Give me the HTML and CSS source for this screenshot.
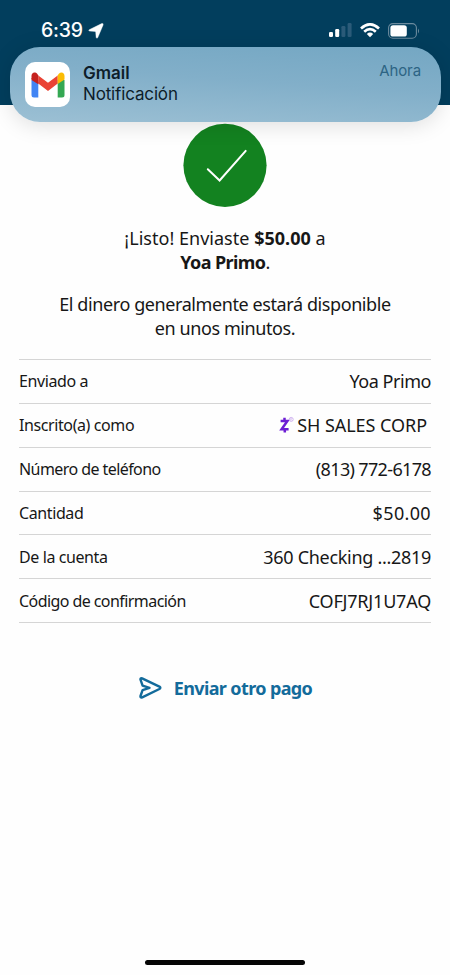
FILE: index.html
```html
<!DOCTYPE html>
<html lang="es">
<head>
<meta charset="utf-8">
<meta name="viewport" content="width=device-width, initial-scale=1">
<title>Pago enviado</title>
<link rel="stylesheet" href="styles.css">
</head>
<body>
<div class="screen">
  <header class="topbar">
    <div class="clock"><span class="time">6:39</span>
      <svg class="location" width="16" height="16" viewBox="0 0 16 16"><path d="M1.2 6.7 13.7.6Q15.7.2 15.1 2L9.8 14.6Q8.7 16 8.1 14.3L7.7 9Q7.6 8.4 7 8.4L1.6 8.1Q0 7.6 1.2 6.7Z" fill="#fff" stroke="#fff" stroke-width=".4"/></svg>
    </div>
    <div class="indicators">
      <svg width="24" height="15" viewBox="0 0 24 15"><rect x="0" y="9" width="4" height="5" rx="1.2" fill="#fff"/><rect x="6.2" y="6" width="4" height="8" rx="1.2" fill="#fff"/><rect x="12.4" y="3" width="4" height="11" rx="1.2" fill="#2b5b79"/><rect x="18.6" y="0" width="4" height="14" rx="1.2" fill="#2b5b79"/></svg>
      <svg class="wifi" width="20" height="15" viewBox="0 0 20 15"><g fill="none" stroke="#fff" stroke-width="2.7"><path d="M1 5.5Q10-2.7 19 5.5"/><path d="M4.2 8.8Q10 3.6 15.8 8.8"/></g><path d="M6.8 10.9Q10 8.1 13.2 10.9L10 14.2Z" fill="#fff"/></svg>
      <svg class="battery" width="32" height="16" viewBox="0 0 32 16"><rect x=".6" y=".6" width="27.8" height="14.6" rx="4.2" fill="none" stroke="#6c8b9e" stroke-width="1.1"/><rect x="2.4" y="2.3" width="16.4" height="11.2" rx="2.6" fill="#fff"/><path d="M30 5.5Q32 8 30 10.5Z" fill="#6c8b9e"/></svg>
    </div>
  </header>

  <aside class="notification">
    <div class="app-icon">
      <svg width="34" height="26" viewBox="0 0 34 26"><path d="M.5 8H7.3V25.5H3Q.5 25.5.5 23Z" fill="#4285f4"/><path d="M33.5 8H26.7V25.5H31Q33.5 25.5 33.5 23Z" fill="#34a853"/><path d="M7.3 3.5 17 10.8 26.7 3.5V11.6L17 19 7.3 11.6Z" fill="#ea4335"/><path d="M7.3 3.5V11.6L.5 7V4C.5.5 4-.5 6.4 2Z" fill="#c5221f"/><path d="M26.7 3.5V12L33.5 7.5V4C33.5.5 30-.5 27.6 2Z" fill="#fbbc04"/><path d="M7.3 12.2.5 8V6L7.3 10Z" fill="#c5221f"/></svg>
    </div>
    <div class="message"><strong>Gmail</strong><span>Notificación</span></div>
    <time class="when">Ahora</time>
  </aside>

  <main class="content">
    <svg class="success" width="84" height="84" viewBox="0 0 84 84"><circle cx="42" cy="42.3" r="41.6" fill="#138220"/><path d="M24.8 46.2 36.6 57.5 62.7 27.9" fill="none" stroke="#fff" stroke-width="2" stroke-linecap="round"/></svg>
    <p class="headline"><span>¡Listo! Enviaste <b>$50.00</b> a</span><br><span class="tight"><b>Yoa Primo</b>.</span></p>
    <p class="note"><span>El dinero generalmente estará disponible</span><br><span>en unos minutos.</span></p>

    <dl class="details">
      <div class="row"><dt>Enviado a</dt><dd class="name">Yoa Primo</dd></div>
      <div class="row"><dt>Inscrito(a) como</dt><dd class="business"><svg class="zelle" width="15" height="18" viewBox="0 0 15 18"><path d="M1.6 5H8.4L2.6 13.2H9.6M5.5 1.8V4.5M5.8 13.5V16.5" fill="none" stroke="#6d1ed4" stroke-width="2.5"/><circle cx="12.2" cy="3.4" r="2" fill="none" stroke="#c7a5ec" stroke-width=".8"/><path d="M11.6 4.7V2.3H12.5Q13.3 3 12.4 3.5L13.1 4.7" fill="none" stroke="#c7a5ec" stroke-width=".5"/></svg>SH SALES CORP</dd></div>
      <div class="row"><dt class="long">Número de teléfono</dt><dd class="phone">(813) 772-6178</dd></div>
      <div class="row"><dt>Cantidad</dt><dd class="amount">$50.00</dd></div>
      <div class="row"><dt>De la cuenta</dt><dd class="account">360 Checking ...2819</dd></div>
      <div class="row"><dt class="long">Código de confirmación</dt><dd class="code">COFJ7RJ1U7AQ</dd></div>
    </dl>

    <a class="again"><svg width="24" height="22" viewBox="0 0 24 22"><path d="M2.5 2.7Q2.2.7 4.1 1.4L21.4 9.6Q23.3 10.8 21.4 12L4.2 20.3Q2.2 21 2.5 19L4.6 13.1 11.5 10.9 4.6 8.6Z" fill="none" stroke="#136b9b" stroke-width="2.4" stroke-linejoin="round"/></svg><span>Enviar otro pago</span></a>
  </main>
  <div class="home-indicator"></div>
</div>
</body>
</html>
```
FILE: styles.css
```css
* { box-sizing: border-box; }
body { margin: 0; background: #fff; }
.screen {
  position: relative;
  width: 450px;
  height: 975px;
  overflow: hidden;
  display: flex;
  flex-direction: column;
  background: #fefefe;
  color: #171717;
  font-family: "Noto Sans", sans-serif;
}
.topbar {
  height: 105px;
  flex: none;
  background: #023e5d;
  display: flex;
  justify-content: space-between;
  align-items: flex-start;
  padding: 18px 30px 0 41px;
}
.clock { display: flex; align-items: center; gap: 5px; height: 25px; }
.time { color: #fff; font: 500 19.5px/25px Inter, sans-serif; letter-spacing: -.2px; }
.indicators { display: flex; align-items: center; height: 25px; }
.wifi { margin-left: 7px; }
.battery { margin-left: 8px; }

.notification {
  position: absolute;
  left: 10px;
  top: 47px;
  width: 431px;
  height: 75px;
  border-radius: 30px;
  background: linear-gradient(184deg, #74a7c3 0%, #82afc9 45%, #9cc0d4 100%);
  box-shadow: 0 3px 22px rgba(0, 0, 0, .13);
  display: flex;
  padding: 15px 20px 0 15px;
  font-family: Inter, sans-serif;
  color: #0d1d29;
}
.app-icon {
  width: 45px;
  height: 45px;
  border-radius: 10px;
  background: #fff;
  display: flex;
  align-items: center;
  justify-content: center;
}
.message { display: flex; flex-direction: column; margin: 1px 0 0 13px; font-size: 17px; line-height: 21px; letter-spacing: -.15px; }
.message strong { font-weight: 600; letter-spacing: 0; }
.when { margin-left: auto; font: 400 15px/18px Inter, sans-serif; letter-spacing: -.1px; color: #2d6484; }

.content { display: flex; flex-direction: column; align-items: center; padding: 18px 19px 0; }
.headline, .note { margin: 0; font-size: 18px; line-height: 24px; text-align: center; white-space: nowrap; }
.headline { margin-top: 19px; letter-spacing: .02px; }
.headline .tight { letter-spacing: -.6px; }
.note { margin-top: 18px; letter-spacing: -.41px; }
.details { width: 100%; margin: 19px 0 0; border-top: 1px solid #d5d5d5; }
.row {
  height: 43.85px;
  border-bottom: 1px solid #d5d5d5;
  display: flex;
  align-items: center;
  justify-content: space-between;
  white-space: nowrap;
}
dt { font-size: 16px; letter-spacing: -.4px; }
dt.long { letter-spacing: -.57px; }
dd { margin: 0; font-size: 18px; display: flex; align-items: center; }
.name { letter-spacing: -.45px; }
.phone { letter-spacing: -.65px; }
.amount { letter-spacing: .35px; }
.account { letter-spacing: -.3px; }
.code { letter-spacing: -.2px; }
.business { padding-right: 4px; letter-spacing: -.05px; }
.zelle { margin-right: 3px; }
.again { display: flex; align-items: center; gap: 12px; margin-top: 53px; color: #136b9b; font-size: 18px; font-weight: 700; line-height: 24px; letter-spacing: -.62px; }
.home-indicator { position: absolute; left: 145px; top: 960px; width: 160px; height: 5px; border-radius: 3px; background: #050505; }
```
